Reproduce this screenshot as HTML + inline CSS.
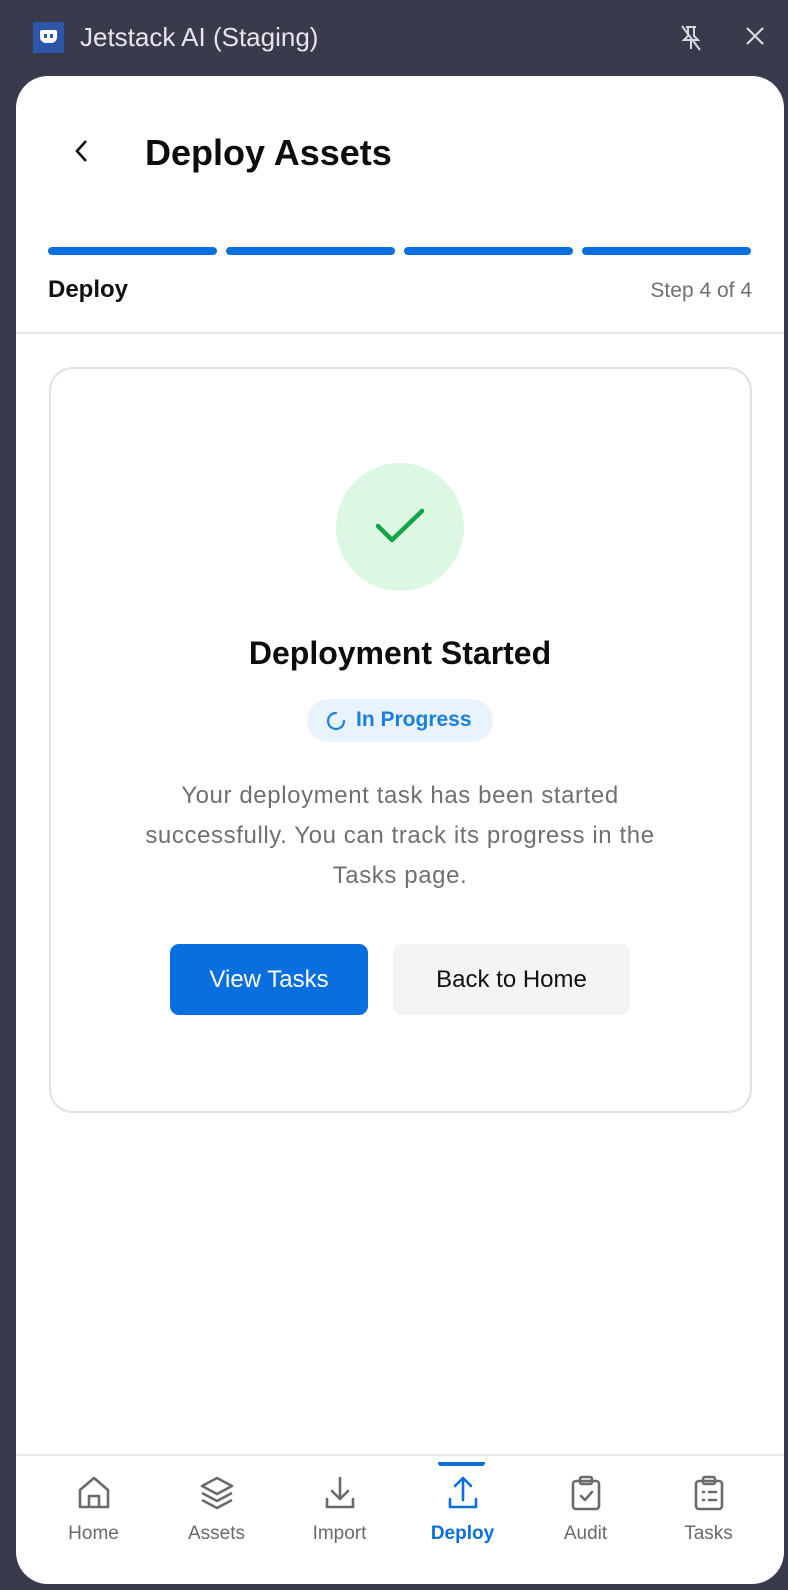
<!DOCTYPE html>
<html><head><meta charset="utf-8"><style>
*{box-sizing:border-box;margin:0;padding:0}
body{width:788px;height:1590px;background:#393a4c;font-family:"Liberation Sans",sans-serif;position:relative;overflow:hidden}
.abs{position:absolute}
.panel{left:16px;top:76px;width:768px;height:1508px;background:#fff;border-radius:32px;overflow:hidden}
.seg{position:absolute;top:171px;height:8px;width:169px;background:#0a6fde;border-radius:4px}
.navi{position:absolute;top:1399px;width:123px;text-align:center;color:#6a6a6a;font-size:19px}
.navi svg{display:block;margin:0 auto 12px}
</style></head><body>
<div class="abs" style="left:33px;top:22px;width:31px;height:31px;background:#2d56a8"></div>
<div class="abs" style="left:40px;top:30px;width:17px;height:13px;background:#fff;border-radius:2px 2px 6px 6px"></div>
<div class="abs" style="left:44px;top:34px;width:3px;height:4px;background:#2d56a8"></div>
<div class="abs" style="left:50px;top:34px;width:3px;height:4px;background:#2d56a8"></div>
<div class="abs" style="left:80px;top:20px;color:#e6e6ea;font-size:26px;line-height:34px">Jetstack AI (Staging)</div>
<svg class="abs" style="left:678px;top:24px" width="26" height="28" viewBox="0 0 26 28" fill="none" stroke="#d8d8de" stroke-width="2"><path d="M8 3h10M10 3v9l-4 4h14l-4-4V3M13 16v9M4 2l18 24"/></svg>
<svg class="abs" style="left:745px;top:26px" width="20" height="20" viewBox="0 0 20 20" stroke="#d8d8de" stroke-width="2.2"><path d="M2 2l16 16M18 2L2 18"/></svg>
<div class="abs panel">
 <svg class="abs" style="left:58px;top:62px" width="16" height="26" viewBox="0 0 16 26" fill="none" stroke="#111" stroke-width="2.6"><path d="M12 3L3 13l9 10"/></svg>
 <div class="abs" style="left:129px;top:54px;font-size:36px;font-weight:bold;color:#0d0d0d;line-height:46px">Deploy Assets</div>
 <div class="seg" style="left:32px"></div><div class="seg" style="left:210px"></div><div class="seg" style="left:388px"></div><div class="seg" style="left:566px"></div>
 <div class="abs" style="left:32px;top:199px;font-size:24px;font-weight:bold;color:#111;line-height:30px">Deploy</div>
 <div class="abs" style="right:32px;top:201px;font-size:21px;color:#707070;line-height:28px">Step 4 of 4</div>
 <div class="abs" style="left:0;top:256px;width:768px;height:2px;background:#e6e6e6"></div>
 <div class="abs" style="left:33px;top:291px;width:703px;height:746px;border:2px solid #e2e2e2;border-radius:24px"></div>
 <div class="abs" style="left:320px;top:387px;width:128px;height:128px;border-radius:50%;background:#dcf8e3"></div>
 <svg class="abs" style="left:357px;top:430px" width="54" height="40" viewBox="0 0 54 40" fill="none" stroke="#16a34a" stroke-width="4.5" stroke-linecap="round" stroke-linejoin="round"><path d="M5 20l14 14L49 5"/></svg>
 <div class="abs" style="left:0;width:768px;top:555px;text-align:center;font-size:32px;font-weight:bold;color:#0d0d0d;line-height:44px">Deployment Started</div>
 <div class="abs" style="left:291px;top:623px;width:186px;height:43px;border-radius:22px;background:#e8f3fd"></div>
 <svg class="abs" style="left:309px;top:634px" width="22" height="22" viewBox="0 0 22 22" fill="none" stroke="#1a7fe0" stroke-width="2.2" stroke-linecap="round"><path d="M19 11a8 8 0 1 1-8-8"/></svg>
 <div class="abs" style="left:340px;top:630px;font-size:21px;color:#1a7fe0;line-height:28px;font-weight:bold">In Progress</div>
 <div class="abs" style="left:64px;width:640px;top:700px;text-align:center;font-size:24px;letter-spacing:0.6px;color:#707070;line-height:40px">Your deployment task has been started<br>successfully. You can track its progress in the<br>Tasks page.</div>
 <div class="abs" style="left:154px;top:868px;width:198px;height:71px;border-radius:9px;background:#0a6fde;color:#fff;font-size:24px;line-height:71px;text-align:center">View Tasks</div>
 <div class="abs" style="left:377px;top:868px;width:237px;height:71px;border-radius:9px;background:#f4f4f4;color:#111;font-size:24px;line-height:71px;text-align:center">Back to Home</div>
 <div class="abs" style="left:0;top:1378px;width:768px;height:2px;background:#e8e8e8"></div>
 <div class="abs" style="left:422px;top:1386px;width:47px;height:4px;border-radius:0 0 3px 3px;background:#0a6fde"></div>
 <div class="navi" style="left:16px"><svg width="36" height="36" viewBox="0 0 36 36" fill="none" stroke="#6a6a6a" stroke-width="2.6" stroke-linejoin="round"><path d="M4 32V15L18 3l14 12v17H4zM13 32V21h10v11"/></svg>Home</div>
 <div class="navi" style="left:139px"><svg width="36" height="36" viewBox="0 0 36 36" fill="none" stroke="#6a6a6a" stroke-width="2.6" stroke-linejoin="round"><path d="M18 3L3 11l15 8 15-8zM3 18l15 8 15-8M3 25l15 8 15-8"/></svg>Assets</div>
 <div class="navi" style="left:262px"><svg width="36" height="36" viewBox="0 0 36 36" fill="none" stroke="#6a6a6a" stroke-width="2.6" stroke-linecap="round" stroke-linejoin="round"><path d="M18 3v20M10 16l8 8 8-8M5 24v8h26v-8"/></svg>Import</div>
 <div class="navi" style="left:385px;color:#0a6fde;font-weight:bold"><svg width="36" height="36" viewBox="0 0 36 36" fill="none" stroke="#0a6fde" stroke-width="2.6" stroke-linecap="round" stroke-linejoin="round"><path d="M18 25V4M10 11l8-8 8 8M5 24v8h26v-8"/></svg>Deploy</div>
 <div class="navi" style="left:508px"><svg width="36" height="36" viewBox="0 0 36 36" fill="none" stroke="#6a6a6a" stroke-width="2.6" stroke-linecap="round" stroke-linejoin="round"><rect x="5" y="6" width="26" height="28" rx="3"/><rect x="12" y="2" width="12" height="7" rx="2"/><path d="M13 21l4 4 7-8"/></svg>Audit</div>
 <div class="navi" style="left:631px"><svg width="36" height="36" viewBox="0 0 36 36" fill="none" stroke="#6a6a6a" stroke-width="2.6" stroke-linecap="round" stroke-linejoin="round"><rect x="5" y="6" width="26" height="28" rx="3"/><rect x="12" y="2" width="12" height="7" rx="2"/><path d="M12 17h1M18 17h7M12 25h1M18 25h7"/></svg>Tasks</div>
</div>
</body></html>
